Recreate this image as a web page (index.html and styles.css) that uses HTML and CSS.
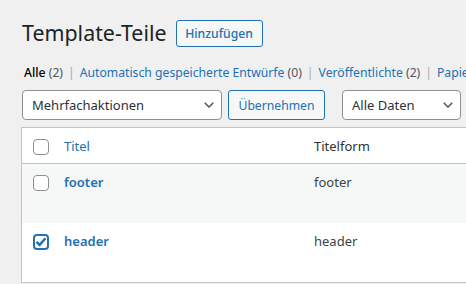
FILE: index.html
```html
<!DOCTYPE html>
<html lang="de">
<head>
<meta charset="utf-8">
<title>Template-Teile</title>
<link rel="stylesheet" href="styles.css">
</head>
<body>
<div class="wrap">
  <div class="heading">
    <h1 class="title">Template-Teile</h1>
    <a class="btn-add">Hinzufügen</a>
  </div>
  <ul class="subsubsub">
    <li class="current">Alle <span class="count">(2)</span></li>
    <li class="sep">|</li>
    <li><a>Automatisch gespeicherte Entwürfe <span class="count">(0)</span></a></li>
    <li class="sep">|</li>
    <li><a>Veröffentlichte <span class="count">(2)</span></a></li>
    <li class="sep">|</li>
    <li><a>Papierkorb <span class="count">(0)</span></a></li>
  </ul>
  <div class="tablenav">
    <div class="select select-bulk"><span>Mehrfachaktionen</span><svg class="chev" width="10" height="6" viewBox="0 0 10 6"><path d="M0.7 0.7 L5 5 L9.3 0.7" fill="none" stroke="#50575e" stroke-width="1.5"/></svg></div>
    <div class="btn-apply">Übernehmen</div>
    <div class="select select-date"><span>Alle Daten</span><svg class="chev" width="10" height="6" viewBox="0 0 10 6"><path d="M0.7 0.7 L5 5 L9.3 0.7" fill="none" stroke="#50575e" stroke-width="1.5"/></svg></div>
  </div>
  <div class="table">
    <div class="row row-head">
      <div class="cb"><span class="box"></span></div>
      <div class="col-title"><a class="sort">Titel</a></div>
      <div class="col-slug">Titelform</div>
    </div>
    <div class="row alt">
      <div class="cb"><span class="box"></span></div>
      <div class="col-title"><a class="name">footer</a></div>
      <div class="col-slug">footer</div>
    </div>
    <div class="row">
      <div class="cb"><span class="box checked"><svg width="12" height="12" viewBox="0 0 12 12"><path d="M1.5 5.8 L4.6 8.9 L10.5 2.2" fill="none" stroke="#2271b1" stroke-width="2.4"/></svg></span></div>
      <div class="col-title"><a class="name">header</a></div>
      <div class="col-slug">header</div>
    </div>
  </div>
</div>
</body>
</html>
```

FILE: styles.css
```css
html, body {
  margin: 0;
  padding: 0;
  overflow: hidden;
}
body {
  background: #f0f0f1;
  font-family: "Noto Sans", "Open Sans", sans-serif;
  color: #3c434a;
  width: 466px;
  height: 284px;
}
.wrap {
  padding: 0 0 0 22px;
}
.heading {
  display: flex;
  align-items: center;
  padding-top: 18px;
  height: 29px;
}
.title {
  margin: 0;
  font-size: 21.4px;
  font-weight: 400;
  line-height: 29px;
  color: #1d2327;
}
.btn-add {
  margin-left: 9px;
  box-sizing: border-box;
  width: 87px;
  height: 27px;
  display: flex;
  align-items: center;
  justify-content: center;
  border: 1px solid #2271b1;
  border-radius: 3px;
  background: #f6f7f7;
  color: #2271b1;
  font-size: 12.2px;
  font-weight: 500;
  margin-top: 1px;
}
.subsubsub {
  list-style: none;
  margin: 0;
  padding: 17px 0 0 2px;
  display: flex;
  font-size: 12.2px;
  line-height: 18px;
  color: #646970;
  white-space: nowrap;
}
.subsubsub li { margin: 0; }
.subsubsub .sep { padding: 0 5px; color: #a7aaad; }
.subsubsub a { color: #2271b1; }
.subsubsub .current { color: #000; font-weight: 500; }
.subsubsub .count { color: #50575e; font-weight: 400; }
.tablenav {
  display: flex;
  margin-top: 8px;
  height: 30px;
}
.select {
  box-sizing: border-box;
  height: 30px;
  border: 1px solid #8c8f94;
  border-radius: 4px;
  background: #fff;
  color: #2c3338;
  font-size: 13px;
  display: flex;
  align-items: center;
  padding: 0 7px 0 9px;
}
.select .chev { margin-left: auto; }
.select-bulk { width: 200px; }
.select-date { width: 119px; margin-left: 17px; }
.btn-apply {
  box-sizing: border-box;
  margin-left: 6px;
  width: 97px;
  height: 30px;
  border: 1px solid #2271b1;
  border-radius: 3px;
  background: #f6f7f7;
  color: #2271b1;
  font-size: 12.2px;
  display: flex;
  align-items: center;
  justify-content: center;
}
.table {
  margin-top: 7px;
  margin-left: -1px;
  width: 700px;
  border: 1px solid #c3c4c7;
  background: #fff;
}
.row {
  display: grid;
  grid-template-columns: 42px 250px 1fr;
  height: 59px;
  font-size: 13px;
  line-height: 20px;
}
.row-head {
  height: 35px;
  border-bottom: 1px solid #c3c4c7;
}
.alt { background: #f6f7f7; }
.cb { padding: 11px 0 0 11px; }
.box {
  display: block;
  box-sizing: border-box;
  width: 16px;
  height: 16px;
  border: 1px solid #8c8f94;
  border-radius: 4px;
  background: #fff;
}
.box.checked {
  border: 2px solid #2271b1;
}
.box.checked svg { display: block; }
.col-title, .col-slug { padding-top: 8px; }
.sort { color: #2271b1; }
.name { color: #2271b1; font-weight: 600; }
.col-slug { color: #3c434a; }
.row-head .col-slug { color: #2c3338; }
```
